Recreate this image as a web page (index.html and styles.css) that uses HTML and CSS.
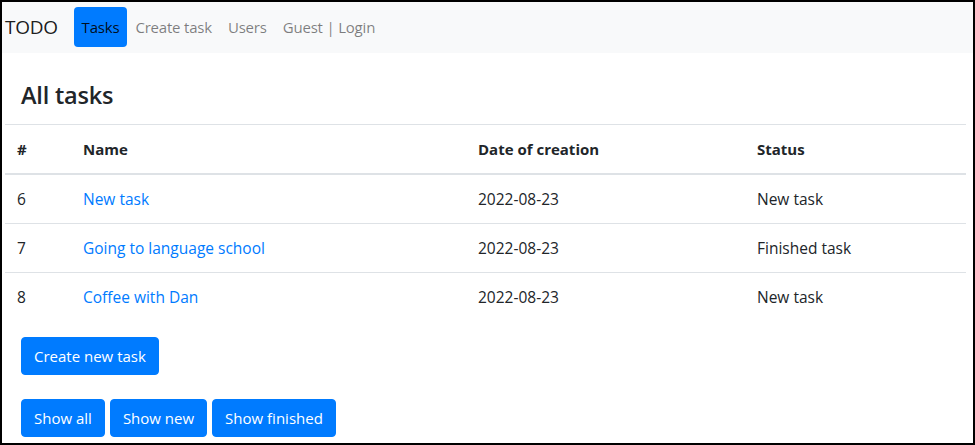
FILE: index.html
```html
<!DOCTYPE html>
<html lang="en">
<head>
<meta charset="utf-8">
<title>TODO</title>
<link rel="stylesheet" href="styles.css">
</head>
<body>
<div class="frame">
  <nav class="navbar">
    <a class="brand" href="#">TODO</a>
    <a class="nav-link active" href="#">Tasks</a>
    <a class="nav-link" href="#">Create task</a>
    <a class="nav-link" href="#">Users</a>
    <a class="nav-link" href="#">Guest | Login</a>
  </nav>
  <main class="content">
    <h4 class="title">All tasks</h4>
    <table class="table">
      <colgroup>
        <col class="c-id"><col class="c-name"><col class="c-date"><col class="c-status">
      </colgroup>
      <thead>
        <tr><th>#</th><th>Name</th><th>Date of creation</th><th>Status</th></tr>
      </thead>
      <tbody>
        <tr><td>6</td><td><a href="#">New task</a></td><td>2022-08-23</td><td>New task</td></tr>
        <tr><td>7</td><td><a href="#">Going to language school</a></td><td>2022-08-23</td><td>Finished task</td></tr>
        <tr><td>8</td><td><a href="#">Coffee with Dan</a></td><td>2022-08-23</td><td>New task</td></tr>
      </tbody>
    </table>
    <div class="actions">
      <button class="btn">Create new task</button>
    </div>
    <div class="filters">
      <button class="btn">Show all</button>
      <button class="btn">Show new</button>
      <button class="btn">Show finished</button>
    </div>
  </main>
</div>
</body>
</html>
```
FILE: styles.css
```css
* { box-sizing: border-box; }
html, body { margin: 0; padding: 0; background: #fff; }
body {
  font-family: "Open Sans", "Liberation Sans", sans-serif;
  font-size: 15px;
  line-height: 24px;
  color: #212529;
}
.frame {
  width: 975px;
  height: 445px;
  border: 2px solid #000;
  overflow: hidden;
}
.navbar {
  display: flex;
  align-items: center;
  background: #f8f9fa;
  padding: 5px 3px 6px;
  height: 51px;
}
.brand {
  font-size: 19px;
  color: rgba(0,0,0,.9);
  text-decoration: none;
  margin-right: 16px;
  letter-spacing: -0.3px;
}
.nav-link {
  display: block;
  padding: 8px 8px;
  color: rgba(0,0,0,.5);
  text-decoration: none;
  border-radius: 4px;
  line-height: 24px;
  letter-spacing: -0.2px;
}
.nav-link.active {
  background: #007bff;
  color: rgba(0,0,0,.9);
}
.content {
  margin: 0 7px 0 3px;
}
.title {
  margin: 28px 0 15px 16px;
  font-size: 23.5px;
  line-height: 28px;
  font-weight: 600;
  letter-spacing: -0.2px;
}
.table {
  width: 961px;
  border-collapse: collapse;
  margin-bottom: 16px;
  font-size: 15.5px;
}
.c-id { width: 66px; }
.c-name { width: 395px; }
.c-date { width: 279px; }
.c-status { width: 221px; }
.table th, .table td {
  padding: 12px;
  text-align: left;
  vertical-align: top;
  border-top: 1px solid #dee2e6;
}
.table th { font-weight: 700; font-size: 15px; }
.table thead th { border-bottom: 2px solid #dee2e6; }
.table a { color: #007bff; text-decoration: none; }
.actions, .filters {
  display: flex;
  gap: 5px;
  padding-left: 16px;
}
.actions { margin-bottom: 24px; }
.btn {
  font-family: inherit;
  font-size: 15px;
  line-height: 24px;
  padding: 6px 12px;
  color: #fff;
  background: #007bff;
  border: 1px solid #007bff;
  border-radius: 4px;
  cursor: pointer;
}
```
